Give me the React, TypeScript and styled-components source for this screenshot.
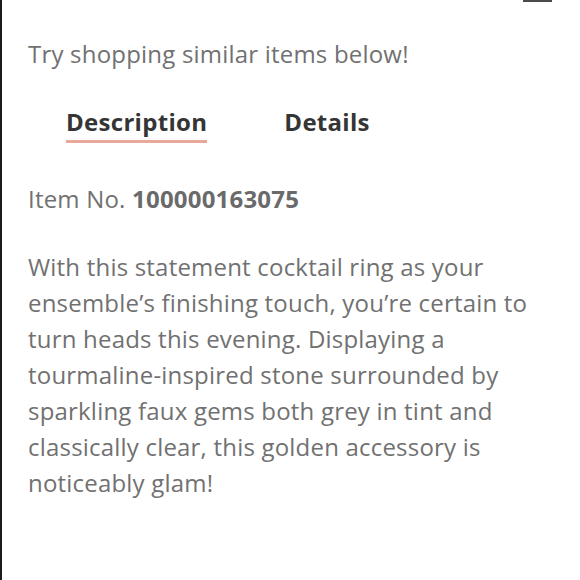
import React from "react";
import styled, { createGlobalStyle } from "styled-components";

const Global = createGlobalStyle`
  html, body { margin: 0; padding: 0; background: #ffffff; }
  body { font-family: "Open Sans", "Noto Sans", sans-serif; }
`;

const Page = styled.div`
  box-sizing: border-box;
  height: 580px;
  overflow: hidden;
  border-left: 2px solid #1c1c1c;
  padding: 0 26px;
  display: flex;
  flex-direction: column;
`;

const Header = styled.header`
  height: 30px;
  position: relative;
  display: flex;
  justify-content: center;
  overflow: hidden;
`;

const Logo = styled.div`
  margin-top: -25px;
  margin-left: 6px;
  font-family: "Lato", sans-serif;
  font-weight: 300;
  font-size: 26px;
  letter-spacing: 13px;
  white-space: nowrap;
  color: #c4b590;
  height: 30px;
  line-height: 30px;
`;

const MenuBar = styled.span`
  position: absolute;
  top: 0;
  right: 2px;
  width: 29px;
  height: 2px;
  background: #4a4a4a;
`;

const Note = styled.p`
  margin: 11px 0 0;
  font-size: 24px;
  line-height: 26px;
  letter-spacing: 0.2px;
  color: #717171;
`;

const Tabs = styled.div`
  display: flex;
  gap: 77px;
  margin: 41px 0 0 38px;
`;

const Tab = styled.button<{ $active?: boolean }>`
  background: none;
  border: none;
  padding: 0 0 4px;
  font-family: inherit;
  font-size: 24px;
  font-weight: 700;
  line-height: 28px;
  letter-spacing: 0.3px;
  color: #353535;
  border-bottom: 3px solid ${(p) => (p.$active ? "#e8a99a" : "transparent")};
  cursor: pointer;
`;

const ItemNo = styled.p`
  margin: 42px 0 0;
  font-size: 24px;
  line-height: 28px;
  letter-spacing: 0.2px;
  color: #717171;
  b { font-weight: 700; color: #6a6a6a; }
`;

const Body = styled.p`
  margin: 36px 0 0;
  font-size: 24px;
  line-height: 36px;
  letter-spacing: 0.2px;
  color: #717171;
`;

export default function App() {
  return (
    <>
      <Global />
      <Page>
        <Header>
          <Logo>ALTAR'D STATE</Logo>
          <MenuBar />
        </Header>
        <Note>Try shopping similar items below!</Note>
        <Tabs>
          <Tab $active>Description</Tab>
          <Tab>Details</Tab>
        </Tabs>
        <ItemNo>
          Item No. <b>100000163075</b>
        </ItemNo>
        <Body>
          With this statement cocktail ring as your ensemble’s finishing touch, you’re certain to turn heads this evening. Displaying a tourmaline-inspired stone surrounded by sparkling faux gems both grey in tint and classically clear, this golden accessory is noticeably glam!
        </Body>
      </Page>
    </>
  );
}
